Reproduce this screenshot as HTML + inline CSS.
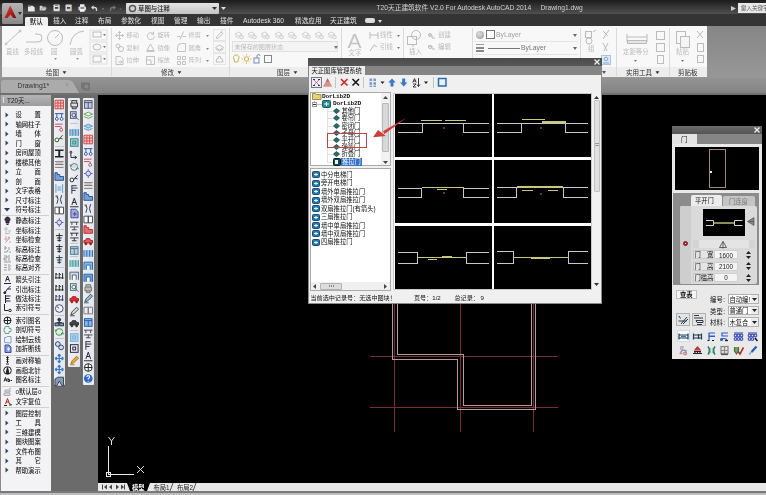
<!DOCTYPE html>
<html><head><meta charset="utf-8"><title>T20 AutoCAD</title>
<style>
html,body{margin:0;padding:0;background:#000;}
#root{position:relative;width:766px;height:495px;overflow:hidden;background:#000;filter:blur(0.4px);font-family:"Liberation Sans","Noto Sans CJK SC",sans-serif;}
#root div,#root span,#root svg{position:absolute;box-sizing:border-box;white-space:nowrap;}
#root span{display:block;}
</style></head><body><div id="root">
<div style="left:0px;top:0px;width:766px;height:14px;background:linear-gradient(#1c1c1c,#505050);"></div>
<div style="left:0px;top:14px;width:766px;height:12px;background:#343434;"></div>
<div style="left:1.5px;top:3px;width:21px;height:21px;background:linear-gradient(#b4b4b4,#a0a0a0 50%,#888);border-radius:1.500px;"></div>
<svg style="left:3.500px;top:4.500px" width="13" height="14" viewBox="0 0 13 14"><defs><linearGradient id="ag" x1="0" y1="0" x2="1" y2="1"><stop offset="0" stop-color="#e05040"/><stop offset=".6" stop-color="#b01c18"/><stop offset="1" stop-color="#6a0c0c"/></linearGradient></defs><path d="M6.200 .5L12.200 13H9.300L6.500 9.500L3.500 13H.5Z" fill="url(#ag)"/></svg>
<svg style="left:18px;top:12px" width="4" height="3"><path d="M0 0h4l-2 3z" fill="#333"/></svg>
<svg style="left:26px;top:3px" width="64" height="11" viewBox="26 3 64 11" fill="none">
<path d="M28 5.800h4.700l2 1.800v3.800h-6.700z" fill="#e8e8e8"/><path d="M28 5.800h3v1.200h-3z" fill="#999"/>
<path d="M39.700 10.400v-4.600h2.300l.8.900h3v1h.9l-1.500 2.700z" fill="#cfcfcf"/><path d="M41 10.400l1.400-2.600h4.300" stroke="#777" stroke-width=".6"/>
<rect x="53.500" y="4.600" width="6.200" height="6.700" rx=".6" fill="#dedede"/><rect x="55" y="7" width="3.200" height="1.800" fill="#444"/><rect x="55" y="4.600" width="3.200" height="1.400" fill="#888"/>
<rect x="65.500" y="4.600" width="6.200" height="6.700" rx=".6" fill="#d4d4d4"/><rect x="67" y="7" width="3.200" height="1.800" fill="#444"/><path d="M69.500 11.500l2-2.500" stroke="#c8a040" stroke-width="1"/>
<rect x="78.500" y="6.500" width="7.500" height="4" rx=".8" fill="#d8d8d8"/><rect x="80" y="4.300" width="4.500" height="2.500" fill="#f0f0f0"/><rect x="80" y="9.200" width="4.500" height="2.600" fill="#f4f4f4"/><rect x="80.500" y="7.500" width="3.500" height="1" fill="#444"/>
</svg>
<svg style="left:90px;top:4px" width="34" height="9" viewBox="90 4 34 9" fill="none"><path d="M96.500 11v-1.500a2 2 0 0 0-2-2h-2" stroke="#d8d8d8" stroke-width="1.300"/><path d="M91 7.500l2.500-2.200v4.400z" fill="#d8d8d8"/><path d="M102 8.500h2l-1 1.200z" fill="#aaa"/><path d="M110.500 11v-1.500a2 2 0 0 1 2-2h2" stroke="#777" stroke-width="1.300"/><path d="M116 7.500l-2.500-2.200v4.400z" fill="#777"/><path d="M119.500 8.500h2l-1 1.200z" fill="#777"/></svg>
<div style="left:126px;top:3px;width:93px;height:11px;background:linear-gradient(#e4e4e4,#c4c4c4);border-radius:1px;"></div>
<svg style="left:128px;top:4px" width="9" height="9" viewBox="0 0 9 9"><circle cx="4.5" cy="4.5" r="3" fill="none" stroke="#555" stroke-width="1.4"/></svg>
<span style="left:138px;top:4.5px;font-size:6.4px;line-height:7.4px;color:#222;font-weight:500;">草图与注释</span>
<svg style="left:212px;top:7px" width="5" height="3"><path d="M0 0h5l-2.500 3z" fill="#333"/></svg>
<svg style="left:221px;top:7px" width="5" height="3"><path d="M0 0h5l-2.500 3z" fill="#ddd"/></svg>
<span style="left:376.5px;top:4px;font-size:6.7px;line-height:7.7px;color:#d0d0d0;">T20天正建筑软件 V2.0 For Autodesk AutoCAD 2014&nbsp;&nbsp;&nbsp;&nbsp;&nbsp;Drawing1.dwg</span>
<div style="left:738px;top:3px;width:28px;height:10px;background:#e8e8e8;"></div>
<span style="left:741px;top:4.5px;font-size:5.5px;line-height:6.5px;color:#555;">鍵入关键字</span>
<svg style="left:731px;top:6px" width="5" height="5"><path d="M0 0l5 2.500l-5 2.500z" fill="#ccc"/></svg>
<div style="left:25px;top:16.5px;width:22.5px;height:10px;background:#efefef;border-radius:1.500px 1.500px 0 0;"></div>
<span style="left:29.7px;top:17.8px;font-size:6.5px;line-height:7.5px;color:#222;font-weight:500;">默认</span>
<span style="left:53px;top:17.2px;font-size:6.7px;line-height:7.7px;color:#e0e0e0;">插入</span>
<span style="left:75px;top:17.2px;font-size:6.7px;line-height:7.7px;color:#e0e0e0;">注释</span>
<span style="left:98px;top:17.2px;font-size:6.7px;line-height:7.7px;color:#e0e0e0;">布局</span>
<span style="left:121px;top:17.2px;font-size:6.7px;line-height:7.7px;color:#e0e0e0;">参数化</span>
<span style="left:151px;top:17.2px;font-size:6.7px;line-height:7.7px;color:#e0e0e0;">视图</span>
<span style="left:174px;top:17.2px;font-size:6.7px;line-height:7.7px;color:#e0e0e0;">管理</span>
<span style="left:197px;top:17.2px;font-size:6.7px;line-height:7.7px;color:#e0e0e0;">输出</span>
<span style="left:220px;top:17.2px;font-size:6.7px;line-height:7.7px;color:#e0e0e0;">插件</span>
<span style="left:243px;top:17.2px;font-size:6.7px;line-height:7.7px;color:#e0e0e0;">Autodesk 360</span>
<span style="left:295px;top:17.2px;font-size:6.7px;line-height:7.7px;color:#e0e0e0;">精选应用</span>
<span style="left:330px;top:17.2px;font-size:6.7px;line-height:7.7px;color:#e0e0e0;">天正建筑</span>
<div style="left:365px;top:18px;width:10px;height:5px;background:#ddd;border-radius:2px;"></div>
<svg style="left:378px;top:20px" width="4" height="3"><path d="M0 0h4l-2 3z" fill="#ddd"/></svg>
<div style="left:0px;top:26px;width:766px;height:52px;background:linear-gradient(#868686,#979797);"></div>
<div style="left:2px;top:26px;width:705px;height:51px;background:#f8f8f8;"></div>
<div style="left:2px;top:67px;width:705px;height:10px;background:#ededed;"></div>
<div style="left:111px;top:28px;width:1px;height:48px;background:#dadada;"></div>
<div style="left:229px;top:28px;width:1px;height:48px;background:#dadada;"></div>
<div style="left:341px;top:28px;width:1px;height:48px;background:#dadada;"></div>
<div style="left:403px;top:28px;width:1px;height:48px;background:#dadada;"></div>
<div style="left:472px;top:28px;width:1px;height:48px;background:#dadada;"></div>
<div style="left:580px;top:28px;width:1px;height:48px;background:#dadada;"></div>
<div style="left:616px;top:28px;width:1px;height:48px;background:#dadada;"></div>
<div style="left:669px;top:28px;width:1px;height:48px;background:#dadada;"></div>
<span style="left:46px;top:68.6px;font-size:6.5px;line-height:7.5px;color:#333;">绘图 <span style="position:static;display:inline;font-size:5px;vertical-align:.8px;margin-left:1px;display:inline-block;transform:scaleX(1.3)">▼</span></span>
<span style="left:161px;top:68.6px;font-size:6.5px;line-height:7.5px;color:#333;">修改 <span style="position:static;display:inline;font-size:5px;vertical-align:.8px;margin-left:1px;display:inline-block;transform:scaleX(1.3)">▼</span></span>
<span style="left:277px;top:68.6px;font-size:6.5px;line-height:7.5px;color:#333;">图层 <span style="position:static;display:inline;font-size:5px;vertical-align:.8px;margin-left:1px;display:inline-block;transform:scaleX(1.3)">▼</span></span>
<span style="left:626px;top:68.6px;font-size:6.5px;line-height:7.5px;color:#2a2a2a;">实用工具 <span style="position:static;display:inline;font-size:5px;vertical-align:.8px;margin-left:1px;display:inline-block;transform:scaleX(1.3)">▼</span></span>
<span style="left:678px;top:68.6px;font-size:6.5px;line-height:7.5px;color:#2a2a2a;">剪贴板</span>
<svg style="left:2px;top:27px" width="110" height="40" viewBox="0 0 110 40" fill="none" stroke="#bcbcbc" stroke-width="1">
<path d="M4 17 L18 4"/><circle cx="4" cy="17" r="1"/><circle cx="18" cy="4" r="1"/>
<path d="M24 15 H36 A4 4 0 0 0 36 7 H33"/>
<circle cx="53" cy="11" r="7.500"/><path d="M53 11 L57 7"/>
<path d="M68 18 Q70 5 82 4"/>
<rect x="88" y="3" width="17" height="10" stroke="#e0e0e0"/><rect x="88" y="15" width="17" height="10" stroke="#e0e0e0"/><rect x="88" y="27" width="17" height="10" stroke="#e0e0e0"/>
<rect x="91" y="5" width="8" height="5"/><ellipse cx="95" cy="20" rx="4" ry="3"/><rect x="91" y="29" width="8" height="6"/>
</svg>
<span style="left:6px;top:48px;font-size:6.4px;line-height:7.4px;color:#bcbcbc;">直线</span>
<span style="left:24px;top:48px;font-size:6.4px;line-height:7.4px;color:#bcbcbc;">多段线</span>
<span style="left:51px;top:48px;font-size:6.4px;line-height:7.4px;color:#bcbcbc;">圆</span>
<span style="left:70px;top:48px;font-size:6.4px;line-height:7.4px;color:#bcbcbc;">圆弧</span>
<svg style="left:54px;top:58px" width="3" height="2"><path d="M0 0h3l-1.500 2z" fill="#999"/></svg>
<svg style="left:76px;top:58px" width="3" height="2"><path d="M0 0h3l-1.500 2z" fill="#999"/></svg>
<svg style="left:103px;top:34px" width="3" height="2"><path d="M0 0h3l-1.500 2z" fill="#777"/></svg>
<svg style="left:103px;top:46px" width="3" height="2"><path d="M0 0h3l-1.500 2z" fill="#777"/></svg>
<svg style="left:103px;top:58px" width="3" height="2"><path d="M0 0h3l-1.500 2z" fill="#777"/></svg>
<span style="left:126.5px;top:31.3px;font-size:6.2px;line-height:7.2px;color:#bcbcbc;">移动</span>
<svg style="left:114.5px;top:30.8px" width="9" height="9" viewBox="0 0 9 9" fill="none" stroke="#bcbcbc" stroke-width=".9"><path d="M4.500 0.500v8M0.500 4.500h8M4.500 .5l-1.500 1.500M4.500 .5l1.500 1.500M4.500 8.500l-1.500-1.500M4.500 8.500l1.500-1.500M.5 4.500l1.500-1.500M.5 4.500l1.500 1.500M8.500 4.500l-1.500-1.500M8.500 4.500l-1.500 1.500"/></svg>
<span style="left:157.5px;top:31.3px;font-size:6.2px;line-height:7.2px;color:#bcbcbc;">旋转</span>
<svg style="left:145.5px;top:30.8px" width="9" height="9" viewBox="0 0 9 9" fill="none" stroke="#bcbcbc" stroke-width=".9"><path d="M7.500 3a3.500 3.500 0 1 0 .8 2.500M7.500 .8v2.400h-2.400"/></svg>
<span style="left:188.5px;top:31.3px;font-size:6.2px;line-height:7.2px;color:#bcbcbc;">修剪</span>
<svg style="left:176.5px;top:30.8px" width="9" height="9" viewBox="0 0 9 9" fill="none" stroke="#bcbcbc" stroke-width=".9"><path d="M0 5.500h3.500M5.500 5.500h3.500M3 8.500l3.500-8" /></svg>
<svg style="left:206px;top:35.3px" width="3" height="2"><path d="M0 0h3l-1.500 2z" fill="#888"/></svg>
<span style="left:126.5px;top:43.8px;font-size:6.2px;line-height:7.2px;color:#bcbcbc;">复制</span>
<svg style="left:114.5px;top:43.3px" width="9" height="9" viewBox="0 0 9 9" fill="none" stroke="#bcbcbc" stroke-width=".9"><circle cx="3" cy="3" r="2"/><circle cx="6" cy="6" r="2.500"/><path d="M6 8.500v.5"/></svg>
<span style="left:157.5px;top:43.8px;font-size:6.2px;line-height:7.2px;color:#bcbcbc;">镜像</span>
<svg style="left:145.5px;top:43.3px" width="9" height="9" viewBox="0 0 9 9" fill="none" stroke="#bcbcbc" stroke-width=".9"><path d="M4.500 1l3.500 6.500h-7zM.5 8.500h8"/></svg>
<span style="left:188.5px;top:43.8px;font-size:6.2px;line-height:7.2px;color:#bcbcbc;">圆角</span>
<svg style="left:176.5px;top:43.3px" width="9" height="9" viewBox="0 0 9 9" fill="none" stroke="#bcbcbc" stroke-width=".9"><path d="M.5 8.500v-4a4 4 0 0 1 4-4h4v8z"/></svg>
<svg style="left:206px;top:47.8px" width="3" height="2"><path d="M0 0h3l-1.500 2z" fill="#888"/></svg>
<span style="left:126.5px;top:56px;font-size:6.2px;line-height:7.2px;color:#bcbcbc;">拉伸</span>
<svg style="left:114.5px;top:55.5px" width="9" height="9" viewBox="0 0 9 9" fill="none" stroke="#bcbcbc" stroke-width=".9"><path d="M1 .5h4.500l2.500 2.500v5.500h-7zM3 6h4M5.500 4.500l1.500 1.500l-1.500 1.500"/></svg>
<span style="left:157.5px;top:56px;font-size:6.2px;line-height:7.2px;color:#bcbcbc;">缩放</span>
<svg style="left:145.5px;top:55.5px" width="9" height="9" viewBox="0 0 9 9" fill="none" stroke="#bcbcbc" stroke-width=".9"><path d="M.5 .5h8v8h-8zM.5 4h4.500v4.500"/></svg>
<span style="left:188.5px;top:56px;font-size:6.2px;line-height:7.2px;color:#bcbcbc;">阵列</span>
<svg style="left:176.5px;top:55.5px" width="9" height="9" viewBox="0 0 9 9" fill="none" stroke="#bcbcbc" stroke-width=".9"><path d="M.5 .5h3v3h-3zM5.500 .5h3v3h-3zM.5 5.500h3v3h-3zM5.500 5.500h3v3h-3z"/></svg>
<svg style="left:206px;top:60px" width="3" height="2"><path d="M0 0h3l-1.500 2z" fill="#888"/></svg>
<svg style="left:213px;top:28px" width="14" height="40" viewBox="0 0 14 40" fill="none" stroke="#bcbcbc" stroke-width=".9">
<rect x=".5" y="1.500" width="12" height="11" stroke="#e4e4e4"/><rect x=".5" y="13.500" width="12" height="11" stroke="#e4e4e4"/><rect x=".5" y="25.500" width="12" height="11" stroke="#e4e4e4"/>
<path d="M3 10l5-6l2 1.500l-5 5z M8 4l1.500-1.500"/>
<path d="M2.500 19.500l4-2.500l4 2.500l-4 2.500z M2.500 21l4 2l4-2"/>
<path d="M3 34h7l-1-3.500h-1.500v-2h-2v2h-1.500z"/>
</svg>
<svg style="left:233.5px;top:29.5px" width="10" height="10" viewBox="0 0 10 10" fill="none" stroke="#cccccc" stroke-width=".9"><path d="M1 4l3.500-2l3.500 2l-3.500 2zM1 6l3.500 2l3.500-2"/><circle cx="7.500" cy="7" r="1.800" fill="#f0f0f0"/></svg>
<svg style="left:246.9px;top:29.5px" width="10" height="10" viewBox="0 0 10 10" fill="none" stroke="#cccccc" stroke-width=".9"><path d="M1 4l3.500-2l3.500 2l-3.500 2zM1 6l3.500 2l3.500-2"/><circle cx="7.500" cy="7" r="1.800" fill="#f0f0f0"/></svg>
<svg style="left:260.3px;top:29.5px" width="10" height="10" viewBox="0 0 10 10" fill="none" stroke="#cccccc" stroke-width=".9"><path d="M1 4l3.500-2l3.500 2l-3.500 2zM1 6l3.500 2l3.500-2"/><circle cx="7.500" cy="7" r="1.800" fill="#f0f0f0"/></svg>
<svg style="left:273.7px;top:29.5px" width="10" height="10" viewBox="0 0 10 10" fill="none" stroke="#cccccc" stroke-width=".9"><path d="M1 4l3.500-2l3.500 2l-3.500 2zM1 6l3.500 2l3.500-2"/><circle cx="7.500" cy="7" r="1.800" fill="#f0f0f0"/></svg>
<svg style="left:287.1px;top:29.5px" width="10" height="10" viewBox="0 0 10 10" fill="none" stroke="#cccccc" stroke-width=".9"><path d="M1 4l3.500-2l3.500 2l-3.500 2zM1 6l3.500 2l3.500-2"/><circle cx="7.500" cy="7" r="1.800" fill="#f0f0f0"/></svg>
<svg style="left:300.5px;top:29.5px" width="10" height="10" viewBox="0 0 10 10" fill="none" stroke="#cccccc" stroke-width=".9"><path d="M1 4l3.500-2l3.500 2l-3.500 2zM1 6l3.500 2l3.500-2"/><circle cx="7.500" cy="7" r="1.800" fill="#f0f0f0"/></svg>
<svg style="left:313.9px;top:29.5px" width="10" height="10" viewBox="0 0 10 10" fill="none" stroke="#cccccc" stroke-width=".9"><path d="M1 4l3.500-2l3.500 2l-3.500 2zM1 6l3.500 2l3.500-2"/><circle cx="7.500" cy="7" r="1.800" fill="#f0f0f0"/></svg>
<svg style="left:327.3px;top:29.5px" width="10" height="10" viewBox="0 0 10 10" fill="none" stroke="#cccccc" stroke-width=".9"><path d="M1 4l3.500-2l3.500 2l-3.500 2zM1 6l3.500 2l3.500-2"/><circle cx="7.500" cy="7" r="1.800" fill="#f0f0f0"/></svg>
<div style="left:232px;top:41px;width:106px;height:11px;background:#f4f4f4;border:1px solid #e0e0e0;"></div>
<span style="left:234.5px;top:42.5px;font-size:6.1px;line-height:7.1px;color:#bcbcbc;">未保存的图层状态</span>
<svg style="left:334px;top:46px" width="4" height="3"><path d="M0 0h4l-2 3z" fill="#777"/></svg>
<svg style="left:232px;top:53px" width="50" height="12" viewBox="0 0 50 12" fill="none">
<path d="M4 2a2.500 2.500 0 0 1 2.500 4l-.8 3h-3l-.8 -3A2.500 2.500 0 0 1 4 2z" stroke="#c8b060" />
<circle cx="14.500" cy="6" r="2.200" stroke="#d8b040"/><path d="M14.500 1v1.500M14.500 9.500V11M9.500 6H11M18 6h1.500M11 2.500l1 1M17 8.500l1 1M11 9.500l1-1M17 3.500l1-1" stroke="#d8b040" stroke-width=".8"/>
<rect x="22" y="5" width="5" height="5" stroke="#7090b8"/><path d="M25 5V3a1.500 1.500 0 0 1 3 0" stroke="#7090b8"/>
<rect x="32.500" y="2.500" width="7" height="7" stroke="#888"/></svg>
<span style="left:347.5px;top:29.5px;font-size:21px;line-height:22px;color:#c4c4c4;line-height:21px;">A</span>
<span style="left:348.5px;top:49px;font-size:6.4px;line-height:7.4px;color:#bcbcbc;">文字</span>
<svg style="left:368px;top:30px" width="12" height="24" viewBox="0 0 12 24" fill="none" stroke="#bcbcbc"><path d="M2 2v7M10 2v7M2 5h8M2 21l4-6 3 2"/></svg>
<span style="left:380px;top:31px;font-size:6.4px;line-height:7.4px;color:#bcbcbc;">线性</span>
<span style="left:380px;top:43px;font-size:6.4px;line-height:7.4px;color:#bcbcbc;">引线</span>
<svg style="left:397px;top:35px" width="3" height="2"><path d="M0 0h3l-1.500 2z" fill="#777"/></svg>
<svg style="left:397px;top:47px" width="3" height="2"><path d="M0 0h3l-1.500 2z" fill="#777"/></svg>
<svg style="left:405px;top:29px" width="32" height="28" viewBox="0 0 32 28" fill="none" stroke="#bcbcbc">
<rect x="2.500" y="7.500" width="9" height="8"/><circle cx="11" cy="6" r="4.500"/><path d="M8 15v3"/>
<path d="M23 6h4v3h3M23 17h4v3h3" /><circle cx="25" cy="6" r="1.500"/><circle cx="25" cy="18" r="1.500"/></svg>
<span style="left:409px;top:48px;font-size:6.4px;line-height:7.4px;color:#bcbcbc;">插入</span>
<span style="left:438px;top:31px;font-size:6.4px;line-height:7.4px;color:#bcbcbc;">创建</span>
<span style="left:438px;top:43px;font-size:6.4px;line-height:7.4px;color:#bcbcbc;">编辑</span>
<div style="left:476px;top:31px;width:8px;height:8px;background:radial-gradient(circle at 40% 35%,#ddd,#999);border-radius:4px;"></div>
<div style="left:486px;top:30px;width:9px;height:9px;background:#fff;border:1px solid #777;"></div>
<span style="left:496px;top:31px;font-size:6.8px;line-height:7.8px;color:#a4a4a4;">ByLayer</span>
<div style="left:476px;top:44px;width:8px;height:1px;background:#999;"></div>
<div style="left:476px;top:47px;width:8px;height:1.5px;background:#888;"></div>
<div style="left:476px;top:50px;width:8px;height:2px;background:#888;"></div>
<div style="left:488px;top:48px;width:32px;height:1px;background:#777;"></div>
<span style="left:521px;top:43.5px;font-size:6.8px;line-height:7.8px;color:#777;">ByLayer</span>
<svg style="left:573px;top:34px" width="4" height="3"><path d="M0 0h4l-2 3z" fill="#666"/></svg>
<svg style="left:573px;top:47px" width="4" height="3"><path d="M0 0h4l-2 3z" fill="#666"/></svg>
<div style="left:474px;top:41px;width:104px;height:1px;background:#e4e4e4;"></div>
<div style="left:474px;top:54px;width:104px;height:1px;background:#e4e4e4;"></div>
<svg style="left:582px;top:28px" width="34" height="40" viewBox="0 0 34 40" fill="none" stroke="#bcbcbc">
<rect x="3.500" y="3.500" width="6" height="6"/><circle cx="7" cy="13" r="3"/><path d="M11 4l3-2"/>
<path d="M21 3l5 5M27 2l-6 9M21 15l4 8M26 15l-4 8"/>
<rect x="19.500" y="27.500" width="9" height="9" fill="#dde9f6" stroke="#a8c4e4"/><circle cx="24" cy="31" r="1.800" stroke="#88a8d0"/><path d="M21 35h6" stroke="#88a8d0"/>
</svg>
<span style="left:588px;top:45px;font-size:6.4px;line-height:7.4px;color:#bcbcbc;">组</span>
<svg style="left:602px;top:71px" width="4" height="3"><path d="M0 0h4l-2 3z" fill="#555"/></svg>
<svg style="left:620px;top:28px" width="90" height="40" viewBox="0 0 90 40" fill="none" stroke="#bcbcbc">
<path d="M7 6v8M27 6v8M7 9h20"/><rect x="7.500" y="12.500" width="19" height="3" fill="#e4e4e4"/>
<rect x="36.500" y="3.500" width="8" height="8"/><rect x="36.500" y="15.500" width="8" height="8"/><rect x="37.500" y="27.500" width="6" height="8"/>
<rect x="56.500" y="3.500" width="9" height="12"/><rect x="60.500" y="8.500" width="9" height="11" fill="#f4f4f4"/>
<path d="M77 3l6 7M83 3l-6 7"/><rect x="77.500" y="15.500" width="6" height="8"/><rect x="77.500" y="27.500" width="6" height="7"/>
</svg>
<span style="left:623px;top:48px;font-size:6.4px;line-height:7.4px;color:#bcbcbc;">定距等分</span>
<span style="left:676px;top:48px;font-size:6.4px;line-height:7.4px;color:#bcbcbc;">粘贴</span>
<svg style="left:634px;top:60px" width="3" height="2"><path d="M0 0h3l-1.500 2z" fill="#777"/></svg>
<svg style="left:681px;top:60px" width="3" height="2"><path d="M0 0h3l-1.500 2z" fill="#777"/></svg>
<div style="left:0px;top:78px;width:766px;height:15px;background:linear-gradient(#939393,#858585);"></div>
<div style="left:0px;top:93px;width:766px;height:2px;background:#707070;"></div>
<svg style="left:0px;top:79px" width="90" height="15" viewBox="0 0 90 15"><path d="M1 14 L1 4 Q1 1 4 1 L68 1 Q72 1 74 5 L79 14 Z" fill="#ababab"/><path d="M81 3.500h8l3 3v5h-8l-3-3z" fill="#747474"/><circle cx="86.500" cy="7.500" r="2" fill="#8a8a8a"/></svg>
<span style="left:17.5px;top:81.5px;font-size:6.9px;line-height:7.9px;color:#333;">Drawing1*</span>
<span style="left:65px;top:81px;font-size:7px;line-height:8px;color:#909090;">×</span>
<div style="left:0px;top:95px;width:98px;height:400px;background:#6b6b6b;"></div>
<div style="left:98px;top:94.5px;width:668px;height:388.5px;background:#000;"></div>
<div style="left:98px;top:483px;width:668px;height:9px;background:#e9e9e9;"></div>
<div style="left:0px;top:491px;width:766px;height:2px;background:#7a7a7a;"></div>
<div style="left:0px;top:493px;width:766px;height:2px;background:#bdbdbd;"></div>
<svg style="left:98px;top:95px" width="668" height="388" viewBox="98 95 668 388" fill="none" shape-rendering="crispEdges">
<g stroke="#7a2c34" stroke-width="1">
<path d="M394.500 300V432M460.500 300V432M533.500 300V432M370 356.500H558M370 407.500H558"/>
</g>
<g stroke="#b89c9c" stroke-width="1">
<path d="M392.500 300V359.500H457.500V409.500H535.500V300"/>
<path d="M397.500 300V354.500H463.500V405.500H531.500V300"/>
</g>
<g stroke="#e8e8e8" stroke-width="1">
<path d="M108.500 446V474.500H134"/><rect x="106.500" y="472.500" width="4" height="4"/>
</g>
<g stroke="#e0e0e0" stroke-width="1" shape-rendering="auto">
<path d="M108.500 437l3 4l3-4M111.500 441v4"/>
<path d="M137 466l7 7M144 466l-7 7"/>
</g>
</svg>
<svg style="left:98px;top:483px" width="110" height="9" viewBox="0 0 110 9">
<g fill="#444"><path d="M5 1.500v5M9 1.500l-3 2.500l3 2.500z"/><path d="M14 1.500l-3 2.500l3 2.500z"/><path d="M18 1.500l3 2.500l-3 2.500z"/><path d="M23 1.500l3 2.500l-3 2.500zM27 1.500v5"/></g>
<path d="M4.500 1.500v5M26.500 1.500v5" stroke="#444"/>
<path d="M29 0H52L49 8H32Z" fill="#000"/>
<path d="M75 0l-3 8M98 0l-3 8" stroke="#555" stroke-width="1"/>
</svg>
<span style="left:132px;top:484px;font-size:6.3px;line-height:7.3px;color:#fff;font-weight:bold;">模型</span>
<span style="left:153.5px;top:484px;font-size:6.3px;line-height:7.3px;color:#222;">布局1</span>
<span style="left:177px;top:484px;font-size:6.3px;line-height:7.3px;color:#222;">布局2</span>
<div style="left:0px;top:95px;width:51px;height:396px;background:#f3f3f5;"></div>
<div style="left:0px;top:95px;width:51px;height:11px;background:linear-gradient(#b4b4b4,#9c9c9c);"></div>
<div style="left:0px;top:95px;width:1px;height:396px;background:#8a8a8a;"></div>
<div style="left:3px;top:97px;width:1px;height:6px;background:#ddd;"></div>
<span style="left:7px;top:96.5px;font-size:6.4px;line-height:7.4px;color:#222;">T20天...</span>
<span style="left:15.5px;top:111.0px;font-size:6.3px;line-height:7.3px;color:#1c1c1c;font-weight:500;">设　　置</span>
<svg style="left:5px;top:111.5px" width="4" height="6"><path d="M.5 .5l3 2.500l-3 2.500z" fill="#34466a"/></svg>
<span style="left:15.5px;top:120.5px;font-size:6.3px;line-height:7.3px;color:#1c1c1c;font-weight:500;">轴网柱子</span>
<svg style="left:5px;top:121.0px" width="4" height="6"><path d="M.5 .5l3 2.500l-3 2.500z" fill="#34466a"/></svg>
<span style="left:15.5px;top:130.0px;font-size:6.3px;line-height:7.3px;color:#1c1c1c;font-weight:500;">墙　　体</span>
<svg style="left:5px;top:130.5px" width="4" height="6"><path d="M.5 .5l3 2.500l-3 2.500z" fill="#34466a"/></svg>
<span style="left:15.5px;top:139.5px;font-size:6.3px;line-height:7.3px;color:#1c1c1c;font-weight:500;">门　　窗</span>
<svg style="left:5px;top:140.0px" width="4" height="6"><path d="M.5 .5l3 2.500l-3 2.500z" fill="#34466a"/></svg>
<span style="left:15.5px;top:149.0px;font-size:6.3px;line-height:7.3px;color:#1c1c1c;font-weight:500;">房间屋顶</span>
<svg style="left:5px;top:149.5px" width="4" height="6"><path d="M.5 .5l3 2.500l-3 2.500z" fill="#34466a"/></svg>
<span style="left:15.5px;top:158.5px;font-size:6.3px;line-height:7.3px;color:#1c1c1c;font-weight:500;">楼梯其他</span>
<svg style="left:5px;top:159.0px" width="4" height="6"><path d="M.5 .5l3 2.500l-3 2.500z" fill="#34466a"/></svg>
<span style="left:15.5px;top:168.0px;font-size:6.3px;line-height:7.3px;color:#1c1c1c;font-weight:500;">立　　面</span>
<svg style="left:5px;top:168.5px" width="4" height="6"><path d="M.5 .5l3 2.500l-3 2.500z" fill="#34466a"/></svg>
<span style="left:15.5px;top:177.5px;font-size:6.3px;line-height:7.3px;color:#1c1c1c;font-weight:500;">剖　　面</span>
<svg style="left:5px;top:178.0px" width="4" height="6"><path d="M.5 .5l3 2.500l-3 2.500z" fill="#34466a"/></svg>
<span style="left:15.5px;top:187.0px;font-size:6.3px;line-height:7.3px;color:#1c1c1c;font-weight:500;">文字表格</span>
<svg style="left:5px;top:187.5px" width="4" height="6"><path d="M.5 .5l3 2.500l-3 2.500z" fill="#34466a"/></svg>
<span style="left:15.5px;top:196.5px;font-size:6.3px;line-height:7.3px;color:#1c1c1c;font-weight:500;">尺寸标注</span>
<svg style="left:5px;top:197.0px" width="4" height="6"><path d="M.5 .5l3 2.500l-3 2.500z" fill="#34466a"/></svg>
<span style="left:15.5px;top:206.0px;font-size:6.3px;line-height:7.3px;color:#1c1c1c;font-weight:500;">符号标注</span>
<svg style="left:4px;top:207.5px" width="6" height="4"><path d="M0 0h6l-3 3.500z" fill="#2a3a5a"/></svg>
<span style="left:15.5px;top:217.0px;font-size:6.3px;line-height:7.3px;color:#1c1c1c;font-weight:500;">静态标注</span>
<svg style="left:3px;top:216.0px" width="9" height="9" viewBox="0 0 9 9" fill="none" stroke="#223" stroke-width="1"><path d="M4.500 1a2.500 2.500 0 0 1 1.500 4.500v1.500h-3v-1.500a2.500 2.500 0 0 1 1.500-4.500z" fill="#334"/><path d="M3.500 8.500h2"/></svg>
<span style="left:15.5px;top:226.5px;font-size:6.3px;line-height:7.3px;color:#1c1c1c;font-weight:500;">坐标标注</span>
<svg style="left:3px;top:225.5px" width="9" height="9" viewBox="0 0 9 9" fill="none" stroke="#b8b8b8" stroke-width="1"><path d="M1 3h4M3 1v6M5 5h3M2 8l5-1"/></svg>
<span style="left:15.5px;top:236.0px;font-size:6.3px;line-height:7.3px;color:#1c1c1c;font-weight:500;">坐标检查</span>
<svg style="left:3px;top:235.0px" width="9" height="9" viewBox="0 0 9 9" fill="none" stroke="#d8a8a8" stroke-width="1"><path d="M1 4h5M3 1v5M2 8l5-5M6 7h2" /><path d="M5 2l2 1" stroke="#999"/></svg>
<span style="left:15.5px;top:245.5px;font-size:6.3px;line-height:7.3px;color:#1c1c1c;font-weight:500;">标高标注</span>
<svg style="left:3px;top:244.5px" width="9" height="9" viewBox="0 0 9 9" fill="none" stroke="#999" stroke-width="1"><path d="M1 2h2v2h-2M6 2v3M1 7h3l1-2M6 7h2"/></svg>
<span style="left:15.5px;top:254.5px;font-size:6.3px;line-height:7.3px;color:#1c1c1c;font-weight:500;">标高检查</span>
<svg style="left:3px;top:253.5px" width="9" height="9" viewBox="0 0 9 9" fill="none" stroke="#999" stroke-width="1"><path d="M1 2h3v2h-3v2h3M6 1v6M1 8h7"/></svg>
<span style="left:15.5px;top:264.0px;font-size:6.3px;line-height:7.3px;color:#1c1c1c;font-weight:500;">标高对齐</span>
<svg style="left:3px;top:263.0px" width="9" height="9" viewBox="0 0 9 9" fill="none" stroke="#999" stroke-width="1"><path d="M1 2h3M1 4.500h3M1 7h3M6 1v7M7 3h1M7 6h1"/></svg>
<span style="left:15.5px;top:276.0px;font-size:6.3px;line-height:7.3px;color:#1c1c1c;font-weight:500;">箭头引注</span>
<svg style="left:3px;top:275.0px" width="9" height="9" viewBox="0 0 9 9" fill="none" stroke="#223" stroke-width="1"><path d="M2.500 6.500l2-5.500l2 5.500M3.300 4.500h2.400M1 8.500h7"/></svg>
<span style="left:15.5px;top:285.5px;font-size:6.3px;line-height:7.3px;color:#1c1c1c;font-weight:500;">引出标注</span>
<svg style="left:3px;top:284.5px" width="9" height="9" viewBox="0 0 9 9" fill="none" stroke="#223" stroke-width="1"><path d="M1.500 8l3-4h3.500M4.500 4l3-3"/><circle cx="1.800" cy="7.800" r="1" fill="#223"/></svg>
<span style="left:15.5px;top:294.8px;font-size:6.3px;line-height:7.3px;color:#1c1c1c;font-weight:500;">做法标注</span>
<svg style="left:3px;top:293.8px" width="9" height="9" viewBox="0 0 9 9" fill="none" stroke="#223" stroke-width="1"><path d="M2.500 1v8M2.500 2h5M2.500 4.500h4M2.500 7h5"/></svg>
<span style="left:15.5px;top:304.0px;font-size:6.3px;line-height:7.3px;color:#1c1c1c;font-weight:500;">索引符号</span>
<svg style="left:3px;top:303.0px" width="9" height="9" viewBox="0 0 9 9" fill="none" stroke="#223" stroke-width="1"><path d="M1.500 1v6.500h4"/><circle cx="7" cy="7.500" r="1.300"/></svg>
<span style="left:15.5px;top:316.5px;font-size:6.3px;line-height:7.3px;color:#1c1c1c;font-weight:500;">索引图名</span>
<svg style="left:3px;top:315.5px" width="9" height="9" viewBox="0 0 9 9" fill="none" stroke="#222" stroke-width="1"><circle cx="4.500" cy="4.500" r="3.500"/><path d="M1 4.500h7M4.500 1v7"/></svg>
<span style="left:15.5px;top:326.0px;font-size:6.3px;line-height:7.3px;color:#1c1c1c;font-weight:500;">剖切符号</span>
<svg style="left:3px;top:325.0px" width="9" height="9" viewBox="0 0 9 9" fill="none" stroke="#6aa88a" stroke-width="1"><path d="M2 1.500h4v2h2v3h-2v2h-4v-2h-1v-3h1z"/></svg>
<span style="left:15.5px;top:335.5px;font-size:6.3px;line-height:7.3px;color:#1c1c1c;font-weight:500;">绘制云线</span>
<svg style="left:3px;top:334.5px" width="9" height="9" viewBox="0 0 9 9" fill="none" stroke="#8aa0c8" stroke-width="1"><path d="M1.500 7.500v-5h2l.5-1h4v6.500z" fill="#eef2fa"/></svg>
<span style="left:15.5px;top:345.3px;font-size:6.3px;line-height:7.3px;color:#1c1c1c;font-weight:500;">加折断线</span>
<svg style="left:3px;top:344.3px" width="9" height="9" viewBox="0 0 9 9" fill="none" stroke="#3a4ab8" stroke-width="1"><path d="M2 1h4l2 2v5.500h-6z" fill="#8a9ad8"/><path d="M4 5h3M5.500 3.500v3" stroke="#fff"/></svg>
<span style="left:15.5px;top:357.0px;font-size:6.3px;line-height:7.3px;color:#1c1c1c;font-weight:500;">画对称轴</span>
<svg style="left:3px;top:356.0px" width="9" height="9" viewBox="0 0 9 9" fill="none" stroke="#222" stroke-width="1"><path d="M4.500 2v5M3 8h3" /><circle cx="4.500" cy="1.500" r=".8" fill="#222"/><path d="M3.500 3.500h2M3.500 5.500h2"/></svg>
<span style="left:15.5px;top:366.5px;font-size:6.3px;line-height:7.3px;color:#1c1c1c;font-weight:500;">画指北针</span>
<svg style="left:3px;top:365.5px" width="9" height="9" viewBox="0 0 9 9" fill="none" stroke="#222" stroke-width="1"><circle cx="4.500" cy="4.500" r="3.800"/><path d="M4.500 1.500l1.500 6h-3z" fill="#222"/></svg>
<span style="left:15.5px;top:376.0px;font-size:6.3px;line-height:7.3px;color:#1c1c1c;font-weight:500;">图名标注</span>
<svg style="left:3px;top:375.0px" width="9" height="9" viewBox="0 0 9 9" fill="none" stroke="#222" stroke-width="1"><path d="M1 6.500l1.500-4l1.500 4M1.700 5h1.800M5 3v3.500h1.500v-2h-1.500M7.500 5.500h1.500"/></svg>
<span style="left:15.5px;top:388.0px;font-size:6.3px;line-height:7.3px;color:#1c1c1c;font-weight:500;">o默认层o</span>
<svg style="left:3px;top:387.0px" width="9" height="9" viewBox="0 0 9 9" fill="none" stroke="#a8a8b0" stroke-width="1"><path d="M2 3h5v2h-5zM1 6h6v2.500h-6z" fill="#dde"/><path d="M6 2l2-1"/></svg>
<span style="left:15.5px;top:397.5px;font-size:6.3px;line-height:7.3px;color:#1c1c1c;font-weight:500;">文字复位</span>
<svg style="left:3px;top:396.5px" width="9" height="9" viewBox="0 0 9 9" fill="none" stroke="#c02020" stroke-width="1"><path d="M2.500 7l2-5.500l2 5.500M3.300 5h2.400"/><path d="M1 8.500h3M6 8h2.500M7 6.500l1.500 1.500" stroke="#222"/></svg>
<span style="left:15.5px;top:409.5px;font-size:6.3px;line-height:7.3px;color:#1c1c1c;font-weight:500;">图层控制</span>
<svg style="left:5px;top:410.0px" width="4" height="6"><path d="M.5 .5l3 2.500l-3 2.500z" fill="#34466a"/></svg>
<span style="left:15.5px;top:419.0px;font-size:6.3px;line-height:7.3px;color:#1c1c1c;font-weight:500;">工　　具</span>
<svg style="left:5px;top:419.5px" width="4" height="6"><path d="M.5 .5l3 2.500l-3 2.500z" fill="#34466a"/></svg>
<span style="left:15.5px;top:428.5px;font-size:6.3px;line-height:7.3px;color:#1c1c1c;font-weight:500;">三维建模</span>
<svg style="left:5px;top:429.0px" width="4" height="6"><path d="M.5 .5l3 2.500l-3 2.500z" fill="#34466a"/></svg>
<span style="left:15.5px;top:438.0px;font-size:6.3px;line-height:7.3px;color:#1c1c1c;font-weight:500;">图块图案</span>
<svg style="left:5px;top:438.5px" width="4" height="6"><path d="M.5 .5l3 2.500l-3 2.500z" fill="#34466a"/></svg>
<span style="left:15.5px;top:447.5px;font-size:6.3px;line-height:7.3px;color:#1c1c1c;font-weight:500;">文件布图</span>
<svg style="left:5px;top:448.0px" width="4" height="6"><path d="M.5 .5l3 2.500l-3 2.500z" fill="#34466a"/></svg>
<span style="left:15.5px;top:457.0px;font-size:6.3px;line-height:7.3px;color:#1c1c1c;font-weight:500;">其　　它</span>
<svg style="left:5px;top:457.5px" width="4" height="6"><path d="M.5 .5l3 2.500l-3 2.500z" fill="#34466a"/></svg>
<span style="left:15.5px;top:466.5px;font-size:6.3px;line-height:7.3px;color:#1c1c1c;font-weight:500;">帮助演示</span>
<svg style="left:5px;top:467.0px" width="4" height="6"><path d="M.5 .5l3 2.500l-3 2.500z" fill="#34466a"/></svg>
<div style="left:2px;top:214.5px;width:47px;height:1px;background:#d0d0d0;"></div>
<div style="left:2px;top:273.5px;width:47px;height:1px;background:#d0d0d0;"></div>
<div style="left:2px;top:313.5px;width:47px;height:1px;background:#d0d0d0;"></div>
<div style="left:2px;top:354.5px;width:47px;height:1px;background:#d0d0d0;"></div>
<div style="left:2px;top:385.5px;width:47px;height:1px;background:#d0d0d0;"></div>
<div style="left:2px;top:407px;width:47px;height:1px;background:#d0d0d0;"></div>
<div style="left:53.5px;top:98px;width:11.5px;height:287px;background:linear-gradient(90deg,#eef0f5,#e4e6ee);border-radius:1px;"></div>
<div style="left:55.5px;top:99.5px;width:7.5px;height:1px;background:#b0b0b0;"></div>
<svg style="left:54.0px;top:98.5px" width="10.5" height="11" viewBox="0 0 11 11" fill="none" stroke="#d04848" stroke-width="1"><rect x="1" y="1" width="9" height="9" fill="#f6d0d0" stroke="none"/><path d="M1 1h9v9h-9zM1 4h9M1 7h9M4 1v9M7 1v9"/></svg>
<svg style="left:54.0px;top:110.5px" width="10.5" height="11" viewBox="0 0 11 11" fill="none" stroke="#2f55a8" stroke-width="1"><path d="M1 2.500h9M3 2.500v4M8 2.500v4"/><circle cx="3" cy="8" r="1.500" fill="#fff"/><circle cx="8" cy="8" r="1.500" fill="#fff"/></svg>
<svg style="left:54.0px;top:121.5px" width="10.5" height="11" viewBox="0 0 11 11" fill="none" stroke="#c04a5a" stroke-width="1"><path d="M1 2h8M1 4.500h6M7.500 4.500v2"/><circle cx="7.500" cy="8" r="1.500" fill="#fff"/></svg>
<svg style="left:54.0px;top:133.0px" width="10.5" height="11" viewBox="0 0 11 11" fill="none" stroke="#405020" stroke-width="1"><path d="M3 9l6-7M6 5l3 1"/><circle cx="3" cy="7" r="2" fill="#dfe"/></svg>
<div style="left:55.0px;top:145.55px;width:8.5px;height:1px;background:#c4c4cc;"></div>
<svg style="left:54.0px;top:148.1px" width="10.5" height="11" viewBox="0 0 11 11" fill="none" stroke="#222" stroke-width="1"><path d="M1 2h9M1 9h9" stroke-width="1.600"/><path d="M5.500 2v7" stroke-width="2"/></svg>
<svg style="left:54.0px;top:159.2px" width="10.5" height="11" viewBox="0 0 11 11" fill="none" stroke="#777" stroke-width="1"><path d="M1 2.500h9M1 5.500h9M1 8.500h9"/><path d="M2 4h7" stroke="#d88"/></svg>
<svg style="left:54.0px;top:171.3px" width="10.5" height="11" viewBox="0 0 11 11" fill="none" stroke="#28509a" stroke-width="1"><path d="M1 9.500h9v-4h-4v-2h-2.500v-2h-2.500z" fill="#7aa0d8"/></svg>
<svg style="left:54.0px;top:182.5px" width="10.5" height="11" viewBox="0 0 11 11" fill="none" stroke="#6890c8" stroke-width="1"><path d="M2 1v9M9 1v9"/><rect x="3.500" y="3" width="4" height="5" fill="#9ec4e8" stroke="none"/></svg>
<svg style="left:54.0px;top:193.5px" width="10.5" height="11" viewBox="0 0 11 11" fill="none" stroke="#335" stroke-width="1"><path d="M3 1q2.500 4.500 0 9M8 1q-2.500 4.500 0 9"/><path d="M3 3l-1.500-1"/></svg>
<svg style="left:54.0px;top:204.5px" width="10.5" height="11" viewBox="0 0 11 11" fill="none" stroke="#445" stroke-width="1"><path d="M1 2h4.500v7h-4.500zM5.500 2h4.500v7h-4.500z" fill="#fff"/></svg>
<svg style="left:54.0px;top:216.5px" width="10.5" height="11" viewBox="0 0 11 11" fill="none" stroke="#5a5ac0" stroke-width="1"><circle cx="5.500" cy="5.500" r="2.500" fill="#dde"/><path d="M5.500 1v2M5.500 8v2M1 5.500h2M8 5.500h2"/></svg>
<div style="left:55.0px;top:229.25px;width:8.5px;height:1px;background:#c4c4cc;"></div>
<svg style="left:54.0px;top:232.0px" width="10.5" height="11" viewBox="0 0 11 11" fill="none" stroke="#222" stroke-width="1"><path d="M5.500 1v9M2 3.500h7M3 6h5M3.500 8.500h4"/></svg>
<svg style="left:54.0px;top:243.1px" width="10.5" height="11" viewBox="0 0 11 11" fill="none" stroke="#222" stroke-width="1"><path d="M5.500 1v9M2 3.500h7M3 6h5M3.500 8.500h4"/></svg>
<svg style="left:54.0px;top:254.2px" width="10.5" height="11" viewBox="0 0 11 11" fill="none" stroke="#234" stroke-width="1"><path d="M5.500 1v9M2 3.500h7M3 6h5M3.500 8.500h4"/></svg>
<div style="left:55.0px;top:266.85px;width:8.5px;height:1px;background:#c4c4cc;"></div>
<svg style="left:54.0px;top:269.5px" width="10.5" height="11" viewBox="0 0 11 11" fill="none" stroke="#222" stroke-width="1"><path d="M1 8h9M2 3v6M5.500 3v6M9 3v6M2 3l1.500 2M5.500 3l1.500 2"/></svg>
<svg style="left:54.0px;top:281.5px" width="10.5" height="11" viewBox="0 0 11 11" fill="none" stroke="#222" stroke-width="1"><path d="M1 8h9M2 3v6M5.500 3v6M9 3v6M2 3l1.500 2M5.500 3l1.500 2"/></svg>
<svg style="left:54.0px;top:292.2px" width="10.5" height="11" viewBox="0 0 11 11" fill="none" stroke="#335" stroke-width="1"><path d="M1 8h9M2 3v6M5.500 3v6M9 3v6M2 3l1.500 2M5.500 3l1.500 2"/></svg>
<svg style="left:54.0px;top:302.8px" width="10.5" height="11" viewBox="0 0 11 11" fill="none" stroke="#446" stroke-width="1"><circle cx="5.500" cy="5.500" r="4" fill="#f4f4ff"/><path d="M5.500 5.500l-2.500-2"/></svg>
<div style="left:55.0px;top:314.65px;width:8.5px;height:1px;background:#c4c4cc;"></div>
<svg style="left:54.0px;top:316.5px" width="10.5" height="11" viewBox="0 0 11 11" fill="none" stroke="#234" stroke-width="1"><path d="M1 9h4v-3h-4zM6 9h4v-3h-4z" fill=" #89a"/><path d="M5.500 2v3M3 5.500h5"/><circle cx="5.500" cy="2.500" r="1.500" fill="#333"/></svg>
<svg style="left:54.0px;top:326.1px" width="10.5" height="11" viewBox="0 0 11 11" fill="none" stroke="#3a8a3a" stroke-width="1"><path d="M2 5.500a3.500 3 0 0 1 7 0M9 6.500a3.500 3 0 0 1-7 0M1 3.500l1 2l1.500-1.500M10 8.500l-1-2l-1.500 1.500"/><rect x="3" y="4" width="5" height="3" fill="#cfc" stroke="none"/></svg>
<div style="left:55.0px;top:338.0px;width:8.5px;height:1px;background:#c4c4cc;"></div>
<svg style="left:54.0px;top:339.9px" width="10.5" height="11" viewBox="0 0 11 11" fill="none" stroke="#346" stroke-width="1"><circle cx="4" cy="4" r="2.500" fill="#cde"/><circle cx="7.500" cy="7.500" r="2.500" fill="#cde"/></svg>
<svg style="left:54.0px;top:352.5px" width="10.5" height="11" viewBox="0 0 11 11" fill="none" stroke="#3a78c8" stroke-width="1"><path d="M5.500 1v9M1 5.500h9M5.500 1l-1.500 2M5.500 1l1.500 2M5.500 10l-1.500-2M5.500 10l1.500-2M1 5.500l2-1.500M1 5.500l2 1.500M10 5.500l-2-1.500M10 5.500l-2 1.500" stroke-width="1.300"/></svg>
<svg style="left:54.0px;top:364.2px" width="10.5" height="11" viewBox="0 0 11 11" fill="none" stroke="#3a78c8" stroke-width="1"><path d="M5.500 1v9M1 5.500h9M5.500 1l-1.500 2M5.500 1l1.500 2M5.500 10l-1.500-2M5.500 10l1.500-2M1 5.500l2-1.500M1 5.500l2 1.500M10 5.500l-2-1.500M10 5.500l-2 1.500" stroke-width="1.300"/></svg>
<svg style="left:54.0px;top:375.5px" width="10.5" height="11" viewBox="0 0 11 11" fill="none" stroke="#345" stroke-width="1"><path d="M1 10v-7l3-2h6v9z" fill="#8a9ab0"/><path d="M3 10l2.500-5l3 5" fill="#dde" /></svg>
<div style="left:68px;top:98px;width:11.5px;height:269px;background:linear-gradient(90deg,#eef0f5,#e4e6ee);border-radius:1px;"></div>
<div style="left:70px;top:99.5px;width:7.5px;height:1px;background:#b0b0b0;"></div>
<svg style="left:68.5px;top:98.5px" width="10.5" height="11" viewBox="0 0 11 11" fill="none" stroke="#333" stroke-width="1"><path d="M2 4h7v4h-7zM3 4v-2.500h5v2.500M3.500 8v2h4v-2" fill="#ddd"/></svg>
<svg style="left:68.5px;top:109.5px" width="10.5" height="11" viewBox="0 0 11 11" fill="none" stroke="#557" stroke-width="1"><rect x="1.500" y="1.500" width="6" height="7" fill="#cde"/><path d="M6 6l4 4"/><circle cx="5" cy="5" r="2"/></svg>
<div style="left:69.5px;top:123.2px;width:8.5px;height:1px;background:#c4c4cc;"></div>
<svg style="left:68.5px;top:126.9px" width="10.5" height="11" viewBox="0 0 11 11" fill="none" stroke="#4a88b8" stroke-width="1"><rect x="1" y="2" width="9" height="7" fill="#9ec4e8" stroke="none"/><path d="M1 2v7M4 2v7M7 2v7M10 2v7"/></svg>
<svg style="left:68.5px;top:137.0px" width="10.5" height="11" viewBox="0 0 11 11" fill="none" stroke="#3a8a8a" stroke-width="1"><rect x="1.500" y="1.500" width="8" height="8" fill="#9cc"/><rect x="4" y="4" width="3" height="3"/></svg>
<svg style="left:68.5px;top:150.1px" width="10.5" height="11" viewBox="0 0 11 11" fill="none" stroke="#223" stroke-width="1"><path d="M2 1.500v6h6M8 7.500l-2-1.500M8 7.500l-2 1.500"/><circle cx="2" cy="2" r="1" fill="#fff"/></svg>
<svg style="left:68.5px;top:161.2px" width="10.5" height="11" viewBox="0 0 11 11" fill="none" stroke="#4a7a6a" stroke-width="1"><path d="M2 5.500a3.500 3 0 0 1 7 0M9 6.500a3.500 3 0 0 1-7 0M1 3.500l1 2l1.500-1.500M10 8.500l-1-2l-1.500 1.500"/><rect x="3" y="4" width="5" height="3" fill="#cde" stroke="none"/></svg>
<svg style="left:68.5px;top:173.3px" width="10.5" height="11" viewBox="0 0 11 11" fill="none" stroke="#223" stroke-width="1"><path d="M3 9l6-7M6 5l3 1"/><circle cx="3" cy="7" r="2" fill="#fff"/></svg>
<svg style="left:68.5px;top:184.0px" width="10.5" height="11" viewBox="0 0 11 11" fill="none" stroke="#334" stroke-width="1"><path d="M3 1v9M3 1.500h5M3 4h6M3 6.500h4"/></svg>
<svg style="left:68.5px;top:196.5px" width="10.5" height="11" viewBox="0 0 11 11" fill="none" stroke="#223" stroke-width="1"><path d="M3 8l2.500-7l2.500 7M4 5.500h3M1 10h9"/></svg>
<svg style="left:68.5px;top:207.5px" width="10.5" height="11" viewBox="0 0 11 11" fill="none" stroke="#3a4aa8" stroke-width="1"><path d="M2 1h5l2.500 2.500v6.500h-7.500z" fill="#aac"/><path d="M4 6h4M6 4v4"/></svg>
<svg style="left:68.5px;top:219.9px" width="10.5" height="11" viewBox="0 0 11 11" fill="none" stroke="#445" stroke-width="1"><path d="M1 2h9M3 2v3M8 2v3M1 7h9M5.500 7v3M3 10h5"/></svg>
<svg style="left:68.5px;top:231.0px" width="10.5" height="11" viewBox="0 0 11 11" fill="none" stroke="#333" stroke-width="1"><path d="M1 2h9M3 2v3M8 2v3M1 7h9M5.500 7v3M3 10h5"/></svg>
<div style="left:69.5px;top:242.75px;width:8.5px;height:1px;background:#c4c4cc;"></div>
<svg style="left:68.5px;top:244.5px" width="10.5" height="11" viewBox="0 0 11 11" fill="none" stroke="#4a7a8a" stroke-width="1"><rect x="1.500" y="1.500" width="8" height="8" fill="#bcd"/><path d="M1.500 3.500h8M5.500 3.500v6"/></svg>
<div style="left:69.5px;top:256.35px;width:8.5px;height:1px;background:#c4c4cc;"></div>
<svg style="left:68.5px;top:258.2px" width="10.5" height="11" viewBox="0 0 11 11" fill="none" stroke="#4a9a9a" stroke-width="1"><rect x="1" y="2" width="9" height="7" fill="#9cc" stroke="none"/><path d="M1 2v7M4 2v7M7 2v7M10 2v7"/></svg>
<svg style="left:68.5px;top:269.5px" width="10.5" height="11" viewBox="0 0 11 11" fill="none" stroke="#567" stroke-width="1"><path d="M1 10v-8h9v8" fill="#cde"/><path d="M3.500 10v-5h4v5" fill="#fff"/></svg>
<svg style="left:68.5px;top:281.5px" width="10.5" height="11" viewBox="0 0 11 11" fill="none" stroke="#567" stroke-width="1"><rect x="1.500" y="1.500" width="6" height="7" fill="#dfd"/><path d="M6 6l4 4"/><circle cx="5" cy="5" r="2"/></svg>
<svg style="left:68.5px;top:294.3px" width="10.5" height="11" viewBox="0 0 11 11" fill="none" stroke="#c02020" stroke-width="1"><path d="M1 7h9v-2.500h-2l-1-2h-3.500l-1 2h-1.500z" fill="#d03030"/><circle cx="3" cy="8" r="1" fill="#222"/><circle cx="8" cy="8" r="1" fill="#222"/></svg>
<svg style="left:68.5px;top:306.0px" width="10.5" height="11" viewBox="0 0 11 11" fill="none" stroke="#444" stroke-width="1"><path d="M2 9l1-3l5-5l2 2l-5 5z" fill="#ddc"/><path d="M1 10h5"/></svg>
<svg style="left:68.5px;top:317.5px" width="10.5" height="11" viewBox="0 0 11 11" fill="none" stroke="#333" stroke-width="1"><path d="M1 7h9v-2.500h-2l-1-2h-3.500l-1 2h-1.500z" fill="#444"/><circle cx="3" cy="8" r="1" fill="#222"/><circle cx="8" cy="8" r="1" fill="#222"/></svg>
<div style="left:69.5px;top:329.5px;width:8.5px;height:1px;background:#c4c4cc;"></div>
<svg style="left:68.5px;top:331.5px" width="10.5" height="11" viewBox="0 0 11 11" fill="none" stroke="#7ab0d8" stroke-width="1"><rect x="1.500" y="1.500" width="8" height="8" fill="#a8d0ec"/><rect x="4" y="4" width="3" height="3"/></svg>
<svg style="left:68.5px;top:343.1px" width="10.5" height="11" viewBox="0 0 11 11" fill="none" stroke="#223" stroke-width="1"><rect x="1.500" y="1.500" width="8" height="8" fill="#eef"/><rect x="4" y="4" width="3" height="3"/></svg>
<svg style="left:68.5px;top:354.7px" width="10.5" height="11" viewBox="0 0 11 11" fill="none" stroke="#b07820" stroke-width="1"><path d="M2 9l1-3l5-5l2 2l-5 5z" fill="#e8a840"/><path d="M1 10h5"/></svg>
<div style="left:82.5px;top:98px;width:11.5px;height:287px;background:linear-gradient(90deg,#eef0f5,#e4e6ee);border-radius:1px;"></div>
<div style="left:84.5px;top:99.5px;width:7.5px;height:1px;background:#b0b0b0;"></div>
<svg style="left:83.0px;top:98.5px" width="10.5" height="11" viewBox="0 0 11 11" fill="none" stroke="#557" stroke-width="1"><rect x="1.500" y="1.500" width="8" height="8" fill="#bcd"/><path d="M1.500 3.500h8M5.500 3.500v6"/></svg>
<svg style="left:83.0px;top:109.5px" width="10.5" height="11" viewBox="0 0 11 11" fill="none" stroke="#7a9a6a" stroke-width="1"><path d="M1 4l4.500-2l4.500 2l-4.500 2zM1 6.500l4.500 2l4.500-2" fill="#dfd"/></svg>
<svg style="left:83.0px;top:121.5px" width="10.5" height="11" viewBox="0 0 11 11" fill="none" stroke="#6a9aca" stroke-width="1"><path d="M1 4l4.500-2l4.500 2l-4.500 2zM1 6.500l4.500 2l4.500-2" fill="#ace"/></svg>
<svg style="left:83.0px;top:133.5px" width="10.5" height="11" viewBox="0 0 11 11" fill="none" stroke="#d04848" stroke-width="1"><rect x="1" y="1" width="9" height="9" fill="#f6d0d0" stroke="none"/><path d="M1 1h9v9h-9zM1 4h9M1 7h9M4 1v9M7 1v9"/></svg>
<svg style="left:83.0px;top:146.0px" width="10.5" height="11" viewBox="0 0 11 11" fill="none" stroke="#2f55a8" stroke-width="1"><path d="M1 2.500h9M3 2.500v4M8 2.500v4"/><circle cx="3" cy="8" r="1.500" fill="#fff"/><circle cx="8" cy="8" r="1.500" fill="#fff"/></svg>
<svg style="left:83.0px;top:157.2px" width="10.5" height="11" viewBox="0 0 11 11" fill="none" stroke="#c04a5a" stroke-width="1"><path d="M1 2h8M1 4.500h6M7.500 4.500v2"/><circle cx="7.500" cy="8" r="1.500" fill="#fff"/></svg>
<svg style="left:83.0px;top:168.3px" width="10.5" height="11" viewBox="0 0 11 11" fill="none" stroke="#5a5ac0" stroke-width="1"><circle cx="5.500" cy="5.500" r="2.500" fill="#dde"/><path d="M5.500 1v2M5.500 8v2M1 5.500h2M8 5.500h2"/></svg>
<svg style="left:83.0px;top:179.5px" width="10.5" height="11" viewBox="0 0 11 11" fill="none" stroke="#777" stroke-width="1"><path d="M1 2.500h9M1 5.500h9M1 8.500h9"/><path d="M2 4h7" stroke="#d88"/></svg>
<svg style="left:83.0px;top:190.5px" width="10.5" height="11" viewBox="0 0 11 11" fill="none" stroke="#28509a" stroke-width="1"><path d="M1 9.500h9v-4h-4v-2h-2.500v-2h-2.500z" fill="#7aa0d8"/></svg>
<svg style="left:83.0px;top:202.5px" width="10.5" height="11" viewBox="0 0 11 11" fill="none" stroke="#335" stroke-width="1"><path d="M3 1q2.500 4.500 0 9M8 1q-2.500 4.500 0 9"/><path d="M3 3l-1.500-1"/></svg>
<svg style="left:83.0px;top:213.8px" width="10.5" height="11" viewBox="0 0 11 11" fill="none" stroke="#445" stroke-width="1"><path d="M1 2h4.500v7h-4.500zM5.500 2h4.500v7h-4.500z" fill="#fff"/></svg>
<svg style="left:83.0px;top:223.9px" width="10.5" height="11" viewBox="0 0 11 11" fill="none" stroke="#c03030" stroke-width="1"><path d="M1 9.500h9v-4h-4v-2h-2.500v-2h-2.500z" fill="#e07070"/></svg>
<svg style="left:83.0px;top:236.0px" width="10.5" height="11" viewBox="0 0 11 11" fill="none" stroke="#a02020" stroke-width="1"><path d="M1 7h9v-2.500h-2l-1-2h-3.500l-1 2h-1.500z" fill="#e06060"/><circle cx="3" cy="8" r="1" fill="#222"/><circle cx="8" cy="8" r="1" fill="#222"/></svg>
<svg style="left:83.0px;top:248.1px" width="10.5" height="11" viewBox="0 0 11 11" fill="none" stroke="#2a68a8" stroke-width="1"><rect x="1" y="2" width="9" height="7" fill="#9ec4e8" stroke="none"/><path d="M1 2v7M4 2v7M7 2v7M10 2v7"/></svg>
<svg style="left:83.0px;top:260.3px" width="10.5" height="11" viewBox="0 0 11 11" fill="none" stroke="#2a68a8" stroke-width="1"><path d="M1 10v-8h9v8" fill="#8ab8e0"/><path d="M3.500 10v-5h4v5" fill="#fff"/></svg>
<svg style="left:83.0px;top:271.5px" width="10.5" height="11" viewBox="0 0 11 11" fill="none" stroke="#2a68a8" stroke-width="1"><path d="M1 10v-8h9v8" fill="#6aa0d8"/><path d="M3.500 10v-5h4v5" fill="#fff"/></svg>
<svg style="left:83.0px;top:282.5px" width="10.5" height="11" viewBox="0 0 11 11" fill="none" stroke="#777" stroke-width="1"><path d="M2 4h7v4h-7zM3 4v-2.500h5v2.500M3.500 8v2h4v-2" fill="#bbb"/></svg>
<svg style="left:83.0px;top:293.3px" width="10.5" height="11" viewBox="0 0 11 11" fill="none" stroke="#456" stroke-width="1"><path d="M2 9l1-3l5-5l2 2l-5 5z" fill="#9bd"/><path d="M1 10h5"/></svg>
<svg style="left:83.0px;top:304.9px" width="10.5" height="11" viewBox="0 0 11 11" fill="none" stroke="#778" stroke-width="1"><path d="M1 2h4.500v7h-4.500zM5.500 2h4.500v7h-4.500z" fill="#eee"/></svg>
<svg style="left:83.0px;top:316.5px" width="10.5" height="11" viewBox="0 0 11 11" fill="none" stroke="#2a58a8" stroke-width="1"><rect x="1.500" y="1.500" width="8" height="8" fill="#8ab8e8"/><path d="M1.500 3.500h8M5.500 3.500v6"/></svg>
<svg style="left:83.0px;top:328.2px" width="10.5" height="11" viewBox="0 0 11 11" fill="none" stroke="#445" stroke-width="1"><path d="M1 2h9M3 2v3M8 2v3M1 7h9M5.500 7v3M3 10h5"/></svg>
<svg style="left:83.0px;top:339.9px" width="10.5" height="11" viewBox="0 0 11 11" fill="none" stroke="#334" stroke-width="1"><path d="M3 1v9M3 1.500h5M3 4h6M3 6.500h4"/></svg>
<svg style="left:83.0px;top:350.5px" width="10.5" height="11" viewBox="0 0 11 11" fill="none" stroke="#223" stroke-width="1"><path d="M3 8l2.500-7l2.500 7M4 5.500h3M1 10h9"/></svg>
<svg style="left:83.0px;top:362.1px" width="10.5" height="11" viewBox="0 0 11 11" fill="none" stroke="#222" stroke-width="1"><circle cx="5.500" cy="5.500" r="4" fill="#fff"/><path d="M1.500 5.500h8M5.500 1.500v8"/></svg>
<svg style="left:83.0px;top:372.7px" width="10.5" height="11" viewBox="0 0 11 11" fill="none" stroke="#2a68c8" stroke-width="1"><circle cx="5.500" cy="5.500" r="4.500" fill="#2a68c8" stroke="none"/><path d="M4 4a1.500 1.500 0 0 1 3 0q0 1-1.500 1.500v1M5.500 8v.8" stroke="#fff" stroke-width="1.200"/></svg>
<div style="left:308px;top:58px;width:294px;height:246px;background:#f0f0f0;border:1px solid #8a8a8a;"></div>
<div style="left:308px;top:58px;width:294px;height:8px;background:linear-gradient(#4a4a4a,#585858);"></div>
<div style="left:308px;top:66px;width:294px;height:9px;background:#858585;"></div>
<div style="left:309px;top:66px;width:56px;height:9px;background:#ececec;"></div>
<span style="left:311.5px;top:67px;font-size:6.3px;line-height:7.3px;color:#111;">天正图库管理系统</span>
<svg style="left:594px;top:59px" width="6" height="6" viewBox="0 0 6 6"><path d="M.5 .5l5 5M5.500 .5l-5 5" stroke="#eee" stroke-width="1.300"/></svg>
<svg style="left:309px;top:76px" width="150" height="15" viewBox="0 0 150 15" fill="none">
<rect x="2.500" y="1.500" width="10" height="10" fill="#e8eef8" stroke="#778"/><path d="M5 4l5 5M10 4l-5 5" stroke="#b55" stroke-width=".8"/><path d="M4 3.500h2M9 3.500h2M4 9.500h2M9 9.500h2" stroke="#335"/>
<path d="M18.600 2l4.400 8.500h-8.800z" fill="#c86a6a"/><path d="M16 7h5.500M15.500 9h6.500" stroke="#f4e0e0" stroke-width=".7"/>
<path d="M26.500 1v11" stroke="#c4c4c4"/>
<path d="M32 3l6.500 6.500M38.500 3l-6.500 6.500" stroke="#d42020" stroke-width="1.500"/>
<path d="M43.500 3l6.500 6.500M50 3l-6.500 6.500" stroke="#111" stroke-width="1.500"/>
<path d="M54.500 1v11" stroke="#c4c4c4"/>
<g fill="#7a9ac8"><rect x="60.500" y="2.500" width="2.600" height="2.600"/><rect x="64.400" y="2.500" width="2.600" height="2.600"/><rect x="60.500" y="6.200" width="2.600" height="2.600"/><rect x="64.400" y="6.200" width="2.600" height="2.600"/><rect x="60.500" y="9.600" width="2.600" height="1.400"/><rect x="64.400" y="9.600" width="2.600" height="1.400"/></g>
<path d="M71.500 5.500h4l-2 2.500z" fill="#222"/>
<path d="M81.500 10.500V6.500h-2.200l3.700-4l3.700 4h-2.200v4z" fill="#3a78c8"/>
<path d="M93.200 2.500v4h-2.200l3.700 4l3.700-4h-2.200v-4z" fill="#3a78c8"/>
<path d="M105.500 2.500l-1.700 4M105.500 2.500l1.700 4M104.400 5h2.200M104 8h3l-3 3h3.200" stroke="#223" stroke-width=".9"/><path d="M109.500 2v8.500M108 8.500l1.500 2l1.500-2" stroke="#223" stroke-width=".9"/>
<path d="M115 5.500h4l-2 2.500z" fill="#222"/>
<path d="M124.500 1v11" stroke="#c4c4c4"/>
<rect x="129.500" y="2.500" width="7.500" height="7.500" fill="#e4f4ff" stroke="#2a68b8" stroke-width="1.500"/>
</svg>
<div style="left:310px;top:92px;width:81px;height:74px;background:#fff;border:1px solid #aaa;"></div>
<div style="left:381px;top:93px;width:9px;height:72px;background:#f2f2f2;"></div>
<div style="left:382px;top:103px;width:7px;height:49px;background:#d8d8d8;border:1px solid #b8b8b8;border-radius:1px;"></div>
<svg style="left:383px;top:96px" width="5" height="3"><path d="M0 3h5l-2.500-3z" fill="#444"/></svg>
<svg style="left:382.500px;top:160.500px" width="5" height="3"><path d="M0 0h5l-2.500 3z" fill="#444"/></svg>
<svg style="left:312px;top:92px" width="10" height="8" viewBox="0 0 10 8"><path d="M.5 1.500h3l1 1h4.500v5h-8.500z" fill="#e8d070" stroke="#8a7a30" stroke-width=".8"/></svg>
<span style="left:322px;top:92.5px;font-size:6.2px;line-height:7.2px;color:#111;font-family:'Liberation Mono',monospace;font-weight:bold;letter-spacing:-.2px;">DorLib2D</span>
<div style="left:314px;top:101px;width:1px;height:3px;background:#aaa;"></div>
<div style="left:311.5px;top:101.5px;width:5px;height:5px;background:#fff;border:1px solid #999;"></div>
<div style="left:312.5px;top:103.5px;width:3px;height:1px;background:#333;"></div>
<div style="left:317px;top:103.5px;width:5px;height:1px;background:#bbb;"></div>
<svg style="left:322px;top:99.500px" width="9" height="8" viewBox="0 0 9 8"><rect x=".5" y=".5" width="8" height="7" rx="1" fill="#2a8a8a" stroke="#1a5a6a"/><path d="M2 4h5M4.500 2v4" stroke="#dff" stroke-width="1"/></svg>
<span style="left:333px;top:100px;font-size:6.2px;line-height:7.2px;color:#111;font-family:'Liberation Mono',monospace;font-weight:bold;letter-spacing:-.2px;">DorLib2D</span>
<div style="left:326.5px;top:108px;width:1px;height:55px;background:#e0e0e0;"></div>
<div style="left:327px;top:111px;width:6px;height:1px;background:#e0e0e0;"></div>
<svg style="left:333px;top:108.0px" width="7" height="6" viewBox="0 0 7 6"><path d="M3.500 .5l3 2.500l-3 2.500l-3-2.500z" fill="#1f6f6a" stroke="#123c3c" stroke-width=".8"/></svg>
<span style="left:341.5px;top:107px;font-size:6.3px;line-height:7.3px;color:#111;">其他门</span>
<div style="left:327px;top:118.4px;width:6px;height:1px;background:#e0e0e0;"></div>
<svg style="left:333px;top:115.4px" width="7" height="6" viewBox="0 0 7 6"><path d="M3.500 .5l3 2.500l-3 2.500l-3-2.500z" fill="#1f6f6a" stroke="#123c3c" stroke-width=".8"/></svg>
<span style="left:341.5px;top:114.4px;font-size:6.3px;line-height:7.3px;color:#111;">卷帘门</span>
<div style="left:327px;top:125.5px;width:6px;height:1px;background:#e0e0e0;"></div>
<svg style="left:333px;top:122.5px" width="7" height="6" viewBox="0 0 7 6"><path d="M3.500 .5l3 2.500l-3 2.500l-3-2.500z" fill="#1f6f6a" stroke="#123c3c" stroke-width=".8"/></svg>
<span style="left:341.5px;top:121.5px;font-size:6.3px;line-height:7.3px;color:#111;">密闭门</span>
<div style="left:327px;top:132.5px;width:6px;height:1px;background:#e0e0e0;"></div>
<svg style="left:333px;top:129.5px" width="7" height="6" viewBox="0 0 7 6"><path d="M3.500 .5l3 2.500l-3 2.500l-3-2.500z" fill="#1f6f6a" stroke="#123c3c" stroke-width=".8"/></svg>
<span style="left:341.5px;top:128.5px;font-size:6.3px;line-height:7.3px;color:#111;">子母门</span>
<div style="left:327px;top:139.5px;width:6px;height:1px;background:#e0e0e0;"></div>
<svg style="left:333px;top:136.5px" width="7" height="6" viewBox="0 0 7 6"><path d="M3.500 .5l3 2.500l-3 2.500l-3-2.500z" fill="#1f6f6a" stroke="#123c3c" stroke-width=".8"/></svg>
<span style="left:341.5px;top:135.5px;font-size:6.3px;line-height:7.3px;color:#111;">平开门</span>
<div style="left:327px;top:147px;width:6px;height:1px;background:#e0e0e0;"></div>
<svg style="left:333px;top:144.0px" width="7" height="6" viewBox="0 0 7 6"><path d="M3.500 .5l3 2.500l-3 2.500l-3-2.500z" fill="#1f6f6a" stroke="#123c3c" stroke-width=".8"/></svg>
<span style="left:341.5px;top:143px;font-size:6.3px;line-height:7.3px;color:#111;">弹簧门</span>
<div style="left:327px;top:154px;width:6px;height:1px;background:#e0e0e0;"></div>
<svg style="left:333px;top:151.0px" width="7" height="6" viewBox="0 0 7 6"><path d="M3.500 .5l3 2.500l-3 2.500l-3-2.500z" fill="#1f6f6a" stroke="#123c3c" stroke-width=".8"/></svg>
<span style="left:341.5px;top:150px;font-size:6.3px;line-height:7.3px;color:#111;">折叠门</span>
<div style="left:327px;top:161.5px;width:6px;height:1px;background:#e0e0e0;"></div>
<svg style="left:332.500px;top:157.500px" width="8" height="8" viewBox="0 0 8 8"><rect x=".5" y=".5" width="7" height="7" rx="1" fill="#244" stroke="#022"/><rect x="2" y="2" width="3" height="4" fill="#dff"/></svg>
<div style="left:341px;top:157.5px;width:21px;height:8px;background:#3373c4;"></div>
<span style="left:342px;top:158px;font-size:6.3px;line-height:7.3px;color:#fff;">推拉门</span>
<div style="left:327px;top:132.5px;width:40px;height:15px;background:transparent;border:1.500px solid #c44444;"></div>
<div style="left:310px;top:168px;width:81px;height:123px;background:#fff;border:1px solid #aaa;"></div>
<svg style="left:312px;top:171.0px" width="8" height="7" viewBox="0 0 8 7"><rect x=".5" y=".5" width="7" height="6" rx="1" fill="#2a78a8" stroke="#1a4a7a"/><path d="M2 3.500h4M4 2v3" stroke="#dff" stroke-width="1"/></svg>
<span style="left:321px;top:170.5px;font-size:6.3px;line-height:7.3px;color:#111;">中分电梯门</span>
<svg style="left:312px;top:179.5px" width="8" height="7" viewBox="0 0 8 7"><rect x=".5" y=".5" width="7" height="6" rx="1" fill="#2a78a8" stroke="#1a4a7a"/><path d="M2 3.500h4M4 2v3" stroke="#dff" stroke-width="1"/></svg>
<span style="left:321px;top:179px;font-size:6.3px;line-height:7.3px;color:#111;">旁开电梯门</span>
<svg style="left:312px;top:188.0px" width="8" height="7" viewBox="0 0 8 7"><rect x=".5" y=".5" width="7" height="6" rx="1" fill="#2a78a8" stroke="#1a4a7a"/><path d="M2 3.500h4M4 2v3" stroke="#dff" stroke-width="1"/></svg>
<span style="left:321px;top:187.5px;font-size:6.3px;line-height:7.3px;color:#111;">墙外单扇推拉门</span>
<svg style="left:312px;top:196.5px" width="8" height="7" viewBox="0 0 8 7"><rect x=".5" y=".5" width="7" height="6" rx="1" fill="#2a78a8" stroke="#1a4a7a"/><path d="M2 3.500h4M4 2v3" stroke="#dff" stroke-width="1"/></svg>
<span style="left:321px;top:196px;font-size:6.3px;line-height:7.3px;color:#111;">墙外双扇推拉门</span>
<svg style="left:312px;top:205.0px" width="8" height="7" viewBox="0 0 8 7"><rect x=".5" y=".5" width="7" height="6" rx="1" fill="#2a78a8" stroke="#1a4a7a"/><path d="M2 3.500h4M4 2v3" stroke="#dff" stroke-width="1"/></svg>
<span style="left:321px;top:204.5px;font-size:6.3px;line-height:7.3px;color:#111;">双扇推拉门(有箭头)</span>
<svg style="left:312px;top:213.5px" width="8" height="7" viewBox="0 0 8 7"><rect x=".5" y=".5" width="7" height="6" rx="1" fill="#2a78a8" stroke="#1a4a7a"/><path d="M2 3.500h4M4 2v3" stroke="#dff" stroke-width="1"/></svg>
<span style="left:321px;top:213px;font-size:6.3px;line-height:7.3px;color:#111;">三扇推拉门</span>
<svg style="left:312px;top:222.0px" width="8" height="7" viewBox="0 0 8 7"><rect x=".5" y=".5" width="7" height="6" rx="1" fill="#2a78a8" stroke="#1a4a7a"/><path d="M2 3.500h4M4 2v3" stroke="#dff" stroke-width="1"/></svg>
<span style="left:321px;top:221.5px;font-size:6.3px;line-height:7.3px;color:#111;">墙中单扇推拉门</span>
<svg style="left:312px;top:230.3px" width="8" height="7" viewBox="0 0 8 7"><rect x=".5" y=".5" width="7" height="6" rx="1" fill="#2a78a8" stroke="#1a4a7a"/><path d="M2 3.500h4M4 2v3" stroke="#dff" stroke-width="1"/></svg>
<span style="left:321px;top:229.8px;font-size:6.3px;line-height:7.3px;color:#111;">墙中双扇推拉门</span>
<svg style="left:312px;top:238.5px" width="8" height="7" viewBox="0 0 8 7"><rect x=".5" y=".5" width="7" height="6" rx="1" fill="#2a78a8" stroke="#1a4a7a"/><path d="M2 3.500h4M4 2v3" stroke="#dff" stroke-width="1"/></svg>
<span style="left:321px;top:238px;font-size:6.3px;line-height:7.3px;color:#111;">四扇推拉门</span>
<div style="left:311px;top:282px;width:79px;height:8px;background:#f0f0f0;"></div>
<div style="left:319.5px;top:282.5px;width:22px;height:7px;background:#dcdcdc;border:1px solid #b4b4b4;border-radius:1px;"></div>
<div style="left:328.5px;top:285px;width:1px;height:2px;background:#888;"></div>
<div style="left:330.5px;top:285px;width:1px;height:2px;background:#888;"></div>
<div style="left:332.5px;top:285px;width:1px;height:2px;background:#888;"></div>
<svg style="left:313px;top:284px" width="3" height="5"><path d="M3 0v5l-3-2.500z" fill="#444"/></svg>
<svg style="left:384px;top:284px" width="3" height="5"><path d="M0 0v5l3-2.500z" fill="#444"/></svg>
<span style="left:310.5px;top:293.5px;font-size:6.1px;line-height:7.1px;color:#111;">当前选中记录号：无选中图块！</span>
<span style="left:414px;top:293.5px;font-size:6.1px;line-height:7.1px;color:#111;">页号：1/2</span>
<span style="left:454.5px;top:293.5px;font-size:6.1px;line-height:7.1px;color:#111;">总记录： 9</span>
<div style="left:393px;top:93px;width:199px;height:197px;background:#fff;border:1px solid #c8c8c8;"></div>
<div style="left:592px;top:93px;width:9px;height:197px;background:#f2f2f2;"></div>
<div style="left:593.5px;top:100px;width:6.5px;height:91.5px;background:#e0e0e0;border:1px solid #c0c0c0;border-radius:1px;"></div>
<div style="left:595px;top:143px;width:3.5px;height:1px;background:#999;"></div>
<div style="left:595px;top:145px;width:3.5px;height:1px;background:#999;"></div>
<svg style="left:594px;top:96px" width="5" height="3"><path d="M0 3h5l-2.500-3z" fill="#333"/></svg>
<svg style="left:594px;top:283px" width="5" height="3"><path d="M0 0h5l-2.500 3z" fill="#333"/></svg>
<div style="left:394.5px;top:94px;width:97px;height:63px;background:#000;"></div>
<div style="left:494px;top:94px;width:97px;height:63px;background:#000;"></div>
<div style="left:394.5px;top:160px;width:97px;height:62.5px;background:#000;"></div>
<div style="left:494px;top:160px;width:97px;height:62.5px;background:#000;"></div>
<div style="left:394.5px;top:225.5px;width:97px;height:63.5px;background:#000;"></div>
<div style="left:494px;top:225.5px;width:97px;height:63.5px;background:#000;"></div>
<svg style="left:394px;top:94px" width="198" height="196" viewBox="394 94 198 196" fill="none" stroke="#c8c8c8" stroke-width="1" shape-rendering="crispEdges">
<path d="M398 123H489M398 132.500H422.500V123M463.500 123V132.500H489"/>
<path d="M421 120.500H441.500M444.500 120.500H465.500" stroke="#c8c878" stroke-width="1.600"/>
<path d="M497 123H588M497 132.500H521.500V123M565 123V132.500H588"/>
<path d="M522 119.500H545M542 122H565.500" stroke="#c8c878" stroke-width="1.600"/>
<path d="M398 188.500H421.500M398 197H421.500V187.500M463.500 187.500V197H489M463.500 188.500H489"/>
<path d="M421.500 187.500H463.500" stroke="#c8c878" stroke-width="1.500"/><path d="M437 189.500H447" stroke="#c8c878" stroke-width="1"/>
<path d="M497 187.500H588M497 197H516.500V187.500M563 187.500V197H588"/>
<path d="M517 187H563M522 190.500H532.500M547.500 190.500H558" stroke="#c8c878" stroke-width="1.200"/>
<path d="M398 252H417.500V263H398M489 252H466.500V263H489"/>
<path d="M417.500 257.500H466.500" stroke="#c8c878" stroke-width="1.500"/><path d="M428 259.500H437M442 256.500H452" stroke="#c8c878" stroke-width="1"/>
<path d="M497 251.500H513.500V263H497M588 251.500H568.500V263H588"/>
<path d="M513.500 257.500H568.500" stroke="#c8c878" stroke-width="1.500"/><path d="M531 258.500H549.500" stroke="#c8c878" stroke-width="1"/>
</svg>
<div style="left:443px;top:127px;width:1.5px;height:1.5px;background:#7a2a2a;"></div>
<div style="left:540px;top:127px;width:1.5px;height:1.5px;background:#7a2a2a;"></div>
<div style="left:443px;top:192px;width:1.5px;height:1.5px;background:#7a2a2a;"></div>
<div style="left:540px;top:193px;width:1.5px;height:1.5px;background:#7a2a2a;"></div>
<svg style="left:366px;top:112px" width="46" height="32" viewBox="366 112 46 32"><path d="M406.800 117.500L383 131.200L384.500 134Z" fill="#d23a3a"/><path d="M373 137.300l5-7.200l7.800 6z" fill="#d23a3a"/></svg>
<div style="left:671.5px;top:126px;width:90.5px;height:232.5px;background:#e9e9e9;"></div>
<div style="left:671.5px;top:126px;width:90.5px;height:8px;background:linear-gradient(#6c6c6c,#545454);"></div>
<svg style="left:754px;top:127px" width="6" height="6" viewBox="0 0 6 6"><path d="M.5 .5l5 5M5.500 .5l-5 5" stroke="#eee" stroke-width="1.300"/></svg>
<div style="left:671.5px;top:134px;width:90.5px;height:10px;background:#858585;"></div>
<div style="left:672px;top:134px;width:25px;height:10px;background:#e4e4e4;"></div>
<span style="left:681px;top:135.5px;font-size:6.3px;line-height:7.3px;color:#111;">门</span>
<div style="left:675px;top:146.5px;width:84px;height:43.5px;background:#000;"></div>
<div style="left:708.5px;top:149px;width:17.5px;height:39px;background:transparent;border:1px solid #a88484;"></div>
<div style="left:710px;top:171px;width:2px;height:2px;background:#eee;"></div>
<div style="left:672.7px;top:192.7px;width:86.6px;height:92.3px;background:#8c8c8c;"></div>
<div style="left:691px;top:195px;width:31px;height:11px;background:#ececec;border-radius:2px 2px 0 0;"></div>
<span style="left:695px;top:197px;font-size:6.3px;line-height:7.3px;color:#111;">平开门</span>
<div style="left:722.5px;top:196px;width:32px;height:10px;background:#c4c4c4;border-radius:2px 2px 0 0;"></div>
<span style="left:729px;top:197.5px;font-size:6.3px;line-height:7.3px;color:#777;">门连窗</span>
<div style="left:679.8px;top:205.5px;width:77px;height:78px;background:#dadada;border-radius:2px;"></div>
<div style="left:679.8px;top:205.5px;width:11.7px;height:78px;background:#cecece;border-radius:2px 0 0 2px;"></div>
<div style="left:702.5px;top:209px;width:42.5px;height:26.5px;background:#000;"></div>
<svg style="left:702px;top:209px" width="44" height="27" viewBox="702 209 44 27" fill="none" stroke="#d4d4d4" stroke-width="1"><path d="M706 220.500H713.500V225.500H706M742.500 220.500H734.500V225.500H742.500"/><path d="M713.500 223H734.500" stroke="#c8c878" stroke-width="1.400"/></svg>
<svg style="left:747px;top:217px" width="8" height="9" viewBox="0 0 8 9"><path d="M7 .5v8L.5 4.500z" fill="#888" stroke="#555" stroke-width=".7"/><path d="M1 4.500h6" stroke="#444" stroke-width=".6"/></svg>
<div style="left:682.5px;top:240.5px;width:5.5px;height:5.5px;background:#c02a2a;border-radius:3px;border:1px solid #7a1a1a;"></div>
<div style="left:684.5px;top:242.5px;width:1.5px;height:1.5px;background:#fff;"></div>
<div style="left:692.7px;top:239.5px;width:62.3px;height:8.7px;background:#e4e4e4;"></div>
<div style="left:692.7px;top:239.5px;width:6px;height:8.7px;background:#d4d4d4;"></div>
<div style="left:749px;top:239.5px;width:6px;height:8.7px;background:#d4d4d4;"></div>
<svg style="left:719px;top:240.500px" width="8" height="8" viewBox="0 0 8 8"><path d="M4 .5l3.500 6h-7z" fill="none" stroke="#444" stroke-width=".8"/><path d="M4 .5v7" stroke="#444" stroke-width=".8"/></svg>
<div style="left:692.7px;top:250.4px;width:20px;height:9px;background:#e4e4e4;border:1px solid #c8c8c8;"></div>
<span style="left:694.5px;top:251.4px;font-size:6.3px;line-height:7.3px;color:#111;">门　宽</span>
<div style="left:713.8px;top:250.4px;width:24.2px;height:9px;background:#f4f4f4;border:1px solid #d0d0d0;"></div>
<span style="left:713.8px;top:251.70000000000002px;font-size:6.3px;line-height:7.3px;color:#222;width:24.2px;text-align:center;">1600</span>
<svg style="left:745.8px;top:251.20000000000002px" width="5" height="8" viewBox="0 0 5 8"><path d="M0 3h5l-2.500-3zM0 5h5l-2.500 3z" fill="#222"/></svg>
<div style="left:692.7px;top:261.5px;width:20px;height:9px;background:#e4e4e4;border:1px solid #c8c8c8;"></div>
<span style="left:694.5px;top:262.5px;font-size:6.3px;line-height:7.3px;color:#111;">门　高</span>
<div style="left:713.8px;top:261.5px;width:24.2px;height:9px;background:#f4f4f4;border:1px solid #d0d0d0;"></div>
<span style="left:713.8px;top:262.8px;font-size:6.3px;line-height:7.3px;color:#222;width:24.2px;text-align:center;">2100</span>
<svg style="left:745.8px;top:262.3px" width="5" height="8" viewBox="0 0 5 8"><path d="M0 3h5l-2.500-3zM0 5h5l-2.500 3z" fill="#222"/></svg>
<div style="left:692.7px;top:272.8px;width:20px;height:9px;background:#e4e4e4;border:1px solid #c8c8c8;"></div>
<span style="left:694.5px;top:273.8px;font-size:6.3px;line-height:7.3px;color:#111;">门槛高</span>
<div style="left:713.8px;top:272.8px;width:24.2px;height:9px;background:#f4f4f4;border:1px solid #d0d0d0;"></div>
<span style="left:713.8px;top:274.1px;font-size:6.3px;line-height:7.3px;color:#222;width:24.2px;text-align:center;">0</span>
<svg style="left:745.8px;top:273.6px" width="5" height="8" viewBox="0 0 5 8"><path d="M0 3h5l-2.500-3zM0 5h5l-2.500 3z" fill="#222"/></svg>
<div style="left:676px;top:290px;width:20.5px;height:8.5px;background:#f6f6f6;border:1px solid #c0c0c0;"></div>
<span style="left:680px;top:291.2px;font-size:6.3px;line-height:7.3px;color:#111;font-weight:bold;">查表</span>
<span style="left:710px;top:295.8px;font-size:6.3px;line-height:7.3px;color:#111;letter-spacing:.3px;">编号:</span>
<div style="left:728px;top:294px;width:30.5px;height:9.5px;background:#fff;border:1px solid #b0b0b0;"></div>
<span style="left:729.5px;top:295.5px;font-size:6.3px;line-height:7.3px;color:#111;">自动编!</span>
<div style="left:751px;top:295px;width:6.5px;height:7.5px;background:#ececec;"></div>
<svg style="left:752px;top:297.5px" width="5" height="3"><path d="M0 0h5l-2.500 3z" fill="#222"/></svg>
<span style="left:710px;top:307.6px;font-size:6.3px;line-height:7.3px;color:#111;letter-spacing:.3px;">类型:</span>
<div style="left:728px;top:305.8px;width:30.5px;height:9.5px;background:#fff;border:1px solid #b0b0b0;"></div>
<span style="left:729.5px;top:307.3px;font-size:6.3px;line-height:7.3px;color:#111;">普通门</span>
<div style="left:751px;top:306.8px;width:6.5px;height:7.5px;background:#ececec;"></div>
<svg style="left:752px;top:309.3px" width="5" height="3"><path d="M0 0h5l-2.500 3z" fill="#222"/></svg>
<span style="left:710px;top:318.8px;font-size:6.3px;line-height:7.3px;color:#111;letter-spacing:.3px;">材料:</span>
<div style="left:728px;top:317px;width:30.5px;height:9.5px;background:#fff;border:1px solid #b0b0b0;"></div>
<span style="left:729.5px;top:318.5px;font-size:6.3px;line-height:7.3px;color:#111;">木复合</span>
<div style="left:751px;top:318px;width:6.5px;height:7.5px;background:#ececec;"></div>
<svg style="left:752px;top:320.5px" width="5" height="3"><path d="M0 0h5l-2.500 3z" fill="#222"/></svg>
<div style="left:676px;top:312.8px;width:14.2px;height:13.5px;background:#e4e4e4;border:1px solid #b0b0b0;"></div>
<div style="left:691.8px;top:312.8px;width:14.2px;height:13.5px;background:#e4e4e4;border:1px solid #b0b0b0;"></div>
<svg style="left:677px;top:314px" width="29" height="12" viewBox="0 0 29 12" fill="none" stroke="#2a3a4a" stroke-width="1"><path d="M2 2l1.500 2.500M1.500 7h8M4 10l6-7M6 10l5-5" /><path d="M2 2v1" stroke="#3a6ab8"/><path d="M17 1.500h5M17 4h9M19 6.500h7v2h-6zM20 10.500h5"/></svg>
<div style="left:677px;top:330px;width:13px;height:12px;background:#fafcfe;border:1px solid #d0d8e0;"></div>
<svg style="left:678.0px;top:330.5px" width="11" height="11" viewBox="0 0 11 11" fill="none" stroke="#1a3a5a" stroke-width="1.200"><path d="M1 2.500v6M10 2.500v6M1 4h9M1 7h9"/><path d="M3 5.500h5" stroke="#4a7aa8"/></svg>
<svg style="left:691.8px;top:330.5px" width="11" height="11" viewBox="0 0 11 11" fill="none" stroke="#1a3a5a" stroke-width="1.200"><path d="M1.500 2.500v6M9.500 2.500v6M1.500 4h8M1.500 7h8M6.500 3v5"/></svg>
<svg style="left:705.6px;top:330.5px" width="11" height="11" viewBox="0 0 11 11" fill="none" stroke="#2a5ac8" stroke-width="1.200"><path d="M9 2h-6v3h6M9 5.500h-6v3.500"/><path d="M1.500 9.500h2M6 9.500h2" stroke="#112"/></svg>
<svg style="left:719.4px;top:330.5px" width="11" height="11" viewBox="0 0 11 11" fill="none" stroke="#2a5ac8" stroke-width="1.200"><path d="M9 2h-6v3h6M2 8.500q3-2 6 0"/><circle cx="2.500" cy="8.500" r="1" /><path d="M6 9.500h3" stroke="#112"/></svg>
<svg style="left:733.2px;top:330.5px" width="11" height="11" viewBox="0 0 11 11" fill="none" stroke="#4a5ab8" stroke-width="1.200"><path d="M1 2h9"/><circle cx="2.500" cy="4.500" r="1.300"/><circle cx="5.500" cy="4.500" r="1.300"/><circle cx="8.500" cy="4.500" r="1.300"/><circle cx="2.500" cy="8" r="1.300"/><circle cx="5.500" cy="8" r="1.300"/><circle cx="8.500" cy="8" r="1.300"/></svg>
<svg style="left:747.0px;top:330.5px" width="11" height="11" viewBox="0 0 11 11" fill="none" stroke="#4a5ab8" stroke-width="1.200"><path d="M1 2h9"/><circle cx="2.500" cy="4.500" r="1.300"/><circle cx="5.500" cy="4.500" r="1.300"/><circle cx="8.500" cy="4.500" r="1.300"/><circle cx="2.500" cy="8" r="1.300"/><circle cx="5.500" cy="8" r="1.300"/><path d="M8 7l2.500 3" stroke="#111" stroke-width="1.500"/></svg>
<svg style="left:678.0px;top:344.5px" width="11" height="11" viewBox="0 0 11 11" fill="none" stroke="#8a8aa8" stroke-width="1.200"><path d="M2 2h4M2 4h3M3 9a3 3 0 0 1 5-3M8 5v4.500"/><path d="M1.500 8.500h3" stroke="#c88"/><circle cx="7" cy="8.500" r="1.300" stroke="#c88"/></svg>
<svg style="left:691.8px;top:344.5px" width="11" height="11" viewBox="0 0 11 11" fill="none" stroke="#223" stroke-width="1.200"><path d="M1 8.500h9M2 6.500h7M3 6.500v2M8 6.500v2M5.500 6.500v2"/><path d="M3 5l2.500-3l2.500 3z" stroke="#c03030" fill="#e06060"/></svg>
<svg style="left:705.6px;top:344.5px" width="11" height="11" viewBox="0 0 11 11" fill="none" stroke="#2a7a6a" stroke-width="1.200"><path d="M2 1.500q3 4 0 8M9 1.500q-3 4 0 8" stroke-width="1.600"/><path d="M4.500 3v5M6.500 3v5" stroke="#8ac8b8"/></svg>
<svg style="left:719.4px;top:344.5px" width="11" height="11" viewBox="0 0 11 11" fill="none" stroke="#888" stroke-width="1.200"><rect x="2" y="1.500" width="7" height="7" fill="#e4e4e4"/><path d="M5.500 1.500v7M2 5.500h7"/><path d="M2 9.500h7" stroke="#555"/></svg>
<svg style="left:733.2px;top:344.5px" width="11" height="11" viewBox="0 0 11 11" fill="none" stroke="#3a7a3a" stroke-width="1.200"><path d="M1.500 2v4l2 3l2-3v-4" fill="#7a9a6a"/><path d="M5 6.500l2 2.500l3.500-6.500" stroke="#b03030" stroke-width="1.600"/></svg>
<svg style="left:747.0px;top:344.5px" width="11" height="11" viewBox="0 0 11 11" fill="none" stroke="#2a5aa8" stroke-width="1.200"><path d="M9.500 1.500l-5 5.500" stroke-width="2.200"/><path d="M4.500 7l-2.500 2.500" stroke="#7aa8d8" stroke-width="1.500"/></svg>
</div></body></html>
